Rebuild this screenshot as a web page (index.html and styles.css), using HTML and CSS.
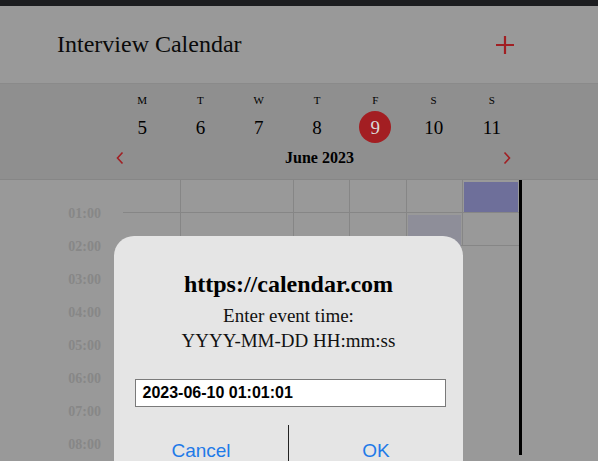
FILE: index.html
```html
<!DOCTYPE html>
<html>
<head>
<meta charset="utf-8">
<link rel="stylesheet" href="styles.css">
</head>
<body>
<div class="topbar"></div>
<header class="header">
  <h1 class="title">Interview Calendar</h1>
  <svg class="plus" width="18" height="18" viewBox="0 0 18 18"><path d="M9 0V18M0 9H18" stroke="#a11f23" stroke-width="2.2"/></svg>
</header>
<section class="week">
  <div class="days-row">
    <div class="day"><span class="dl">M</span><span class="dn">5</span></div>
    <div class="day"><span class="dl">T</span><span class="dn">6</span></div>
    <div class="day"><span class="dl">W</span><span class="dn">7</span></div>
    <div class="day"><span class="dl">T</span><span class="dn">8</span></div>
    <div class="day"><span class="dl">F</span><span class="dn today">9</span></div>
    <div class="day"><span class="dl">S</span><span class="dn">10</span></div>
    <div class="day"><span class="dl">S</span><span class="dn">11</span></div>
  </div>
  <div class="month-row">
    <svg class="chev" width="10" height="14" viewBox="0 0 10 14"><path d="M7.5 1.5L2.5 7L7.5 12.5" fill="none" stroke="#a11f23" stroke-width="1.6"/></svg>
    <span class="month">June 2023</span>
    <svg class="chev" width="10" height="14" viewBox="0 0 10 14"><path d="M2.5 1.5L7.5 7L2.5 12.5" fill="none" stroke="#a11f23" stroke-width="1.6"/></svg>
  </div>
</section>
<section class="board">
  <div class="times">
    <span class="t">01:00</span><span class="t">02:00</span><span class="t">03:00</span><span class="t">04:00</span>
    <span class="t">05:00</span><span class="t">06:00</span><span class="t">07:00</span><span class="t">08:00</span>
  </div>
  <div class="grid">
    <div class="c"></div><div class="c bl"></div><div class="c"></div><div class="c bl"></div><div class="c bl"></div><div class="c bl"></div><div class="c bl"><div class="ev ev1"></div></div>
    <div class="c"></div><div class="c bl"></div><div class="c"></div><div class="c bl"></div><div class="c bl"></div><div class="c bl"><div class="ev ev2"></div></div><div class="c bl"></div>
  </div>
</section>
<div class="dialog">
  <div class="d-title">https://calendar.com</div>
  <div class="d-msg">Enter event time:<br>YYYY-MM-DD HH:mm:ss</div>
  <div class="d-input">2023-06-10 01:01:01</div>
  <div class="d-buttons">
    <span class="btn">Cancel</span>
    <span class="btn btn-ok">OK</span>
  </div>
</div>
</body>
</html>
```
FILE: styles.css
```css
html, body {
  margin: 0;
  padding: 0;
}
body {
  width: 598px;
  height: 461px;
  overflow: hidden;
  background: #999999;
  font-family: "Liberation Serif", serif;
  color: #000;
  position: relative;
}
.topbar {
  height: 6px;
  background: #1c1d20;
}
.header {
  height: 78px;
  border-bottom: 1px solid #8a8a8a;
  display: flex;
  align-items: center;
  justify-content: space-between;
  padding: 0 84px 0 57px;
  box-sizing: border-box;
  background: #999999;
}
.title {
  margin: 0;
  font-size: 24px;
  font-weight: normal;
  color: #0a0a0a;
}
.plus {
  display: block;
}
.week {
  background: #8f8f8f;
  height: 95px;
  box-sizing: border-box;
  padding-top: 9px;
}
.days-row {
  display: grid;
  grid-template-columns: repeat(7, 58.3px);
  margin-left: 113px;
}
.day {
  display: flex;
  flex-direction: column;
  align-items: center;
  gap: 4px;
}
.dl {
  font-size: 11px;
  line-height: 14px;
  height: 14px;
}
.dn {
  font-size: 19px;
  width: 32px;
  height: 32px;
  line-height: 34px;
  text-align: center;
  border-radius: 50%;
}
.today {
  background: #a31e22;
  color: #d9d9d9;
}
.month-row {
  display: flex;
  align-items: center;
  justify-content: space-between;
  padding: 0 86px 0 115px;
  height: 20px;
  margin-top: 5px;
}
.chev {
  display: block;
}
.month {
  font-size: 16px;
  font-weight: bold;
  margin-left: 12px;
}
.board {
  display: flex;
  border-top: 1px solid #868686;
  background: #999999;
}
.times {
  width: 123px;
  display: flex;
  flex-direction: column;
  padding-top: 17px;
  box-sizing: border-box;
}
.t {
  height: 33px;
  line-height: 33px;
  text-align: right;
  padding-right: 22px;
  font-size: 14px;
  font-weight: bold;
  color: #878787;
}
.grid {
  display: grid;
  grid-template-columns: repeat(7, 56.57px);
  grid-template-rows: 33px 33px;
  align-content: start;
  height: 275px;
  overflow: hidden;
  border-right: 3px solid #000;
}
.c {
  border-bottom: 1px solid #868686;
  box-sizing: border-box;
  position: relative;
}
.bl {
  border-left: 1px solid #868686;
}
.ev {
  position: absolute;
}
.ev1 {
  left: 1px;
  right: 1px;
  top: 2px;
  bottom: 0;
  background: #6e6f9a;
}
.ev2 {
  left: 1px;
  right: 1px;
  top: 2px;
  height: 90px;
  background: #8e8e99;
}
.dialog {
  position: absolute;
  left: 114px;
  top: 236px;
  width: 349px;
  height: 225px;
  background: #e5e5e5;
  border-radius: 20px 20px 0 0;
  display: flex;
  flex-direction: column;
  align-items: center;
  padding-top: 34px;
  box-sizing: border-box;
}
.d-title {
  font-size: 24px;
  font-weight: bold;
  line-height: 28px;
}
.d-msg {
  font-size: 19px;
  line-height: 25px;
  text-align: center;
  margin-top: 5px;
  color: #111;
}
.d-input {
  margin-top: 26px;
  width: 311px;
  height: 28px;
  box-sizing: border-box;
  border: 1px solid #7a7a7a;
  background: #fff;
  font-family: "Liberation Sans", sans-serif;
  font-weight: bold;
  font-size: 16px;
  line-height: 26px;
  padding-left: 7px;
  margin-left: 3px;
}
.d-buttons {
  margin-top: 18px;
  width: 100%;
  display: flex;
}
.btn {
  flex: 1;
  text-align: center;
  font-family: "Liberation Sans", sans-serif;
  font-size: 19px;
  color: #1f7ae8;
  height: 36px;
  line-height: 52px;
  overflow: visible;
}
.btn-ok {
  border-left: 1px solid #222;
}
```
